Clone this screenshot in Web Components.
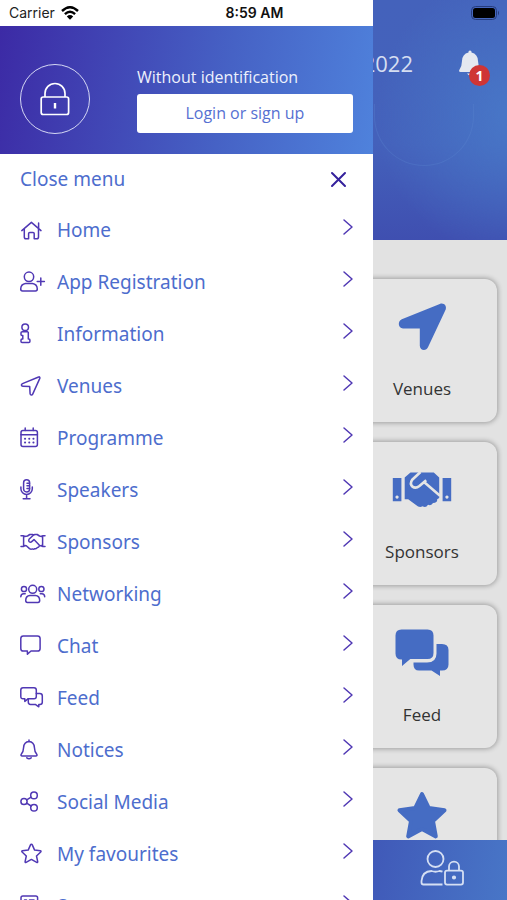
<!DOCTYPE html>
<html lang="en">
<head>
<meta charset="utf-8">
<meta name="viewport" content="width=device-width, initial-scale=1">
<title>Event menu</title>
<style>
  body {
    margin: 0;
    font-family: "Open Sans", "Noto Sans", sans-serif;
    background: #e3e3e3;
  }
</style>
</head>
<body>
<app-shell>
  <status-bar slot="status"></status-bar>

  <side-menu slot="menu">
    <menu-item icon="home">Home</menu-item>
    <menu-item icon="register">App Registration</menu-item>
    <menu-item icon="info">Information</menu-item>
    <menu-item icon="venues">Venues</menu-item>
    <menu-item icon="calendar">Programme</menu-item>
    <menu-item icon="mic">Speakers</menu-item>
    <menu-item icon="handshake">Sponsors</menu-item>
    <menu-item icon="people">Networking</menu-item>
    <menu-item icon="chat">Chat</menu-item>
    <menu-item icon="feed">Feed</menu-item>
    <menu-item icon="bell">Notices</menu-item>
    <menu-item icon="share">Social Media</menu-item>
    <menu-item icon="star">My favourites</menu-item>
    <menu-item icon="survey">Surveys</menu-item>
  </side-menu>

  <event-header count="1">2022</event-header>
  <tile-list>
    <tile-card icon="venues-solid">Venues</tile-card>
    <tile-card icon="handshake-solid">Sponsors</tile-card>
    <tile-card icon="feed-solid">Feed</tile-card>
    <tile-card icon="star-solid" label="My favourites"></tile-card>
  </tile-list>
  <bottom-bar></bottom-bar>
</app-shell>

<script>
// Outline icons sit in a 26x24 box, solid tile icons in a 60x48 box
const icons = {
  home: '<path d="M1.8 12.6 11.4 4.4l9.6 8.2M4.3 10.8V19q0 1.8 1.7 1.8h2.6v-5.2q0-1.2 1.2-1.2h3.2q1.2 0 1.2 1.2v5.2h2.6q1.7 0 1.7-1.8v-8.2M18.6 5v5"/>',
  register: '<circle cx="9" cy="6.8" r="4.7"/><path d="M5.6 13.6h6.8q4.7.6 4.9 5.4 0 1.9-1.8 1.9h-13q-1.8 0-1.8-1.9.2-4.8 4.9-5.4zM17.2 11.600h7.2M20.8 8v7.2"/>',
  info: '<circle cx="5.200" cy="5.200" r="3.300"/><path d="M2.300 9.800h5.300l.7.700v6.500h.7q.9 0 .9 1v1.600q0 1-1 1H2q-1 0-1-1V18q0-1 1-1h.8v-3.600H2q-1 0-1-1v-1.600q0-1 1.300-1z"/>',
  venues: '<path d="M18.6 3 2.500 9.600c-1.700.8-1.300 2.600.3 2.700l6.900.3.4 7.200c.1 1.500 1.900 1.800 2.600.3l7.100-15.700c.4-1-.3-1.800-1.200-1.400z"/>',
  calendar: '<rect x="1" y="4.600" width="16.400" height="16" rx="2"/><path d="M1 8.700h16.400M5.200 2v2.600M13.200 2v2.600"/><path stroke-width="2" d="M5 12.700h.1M9.200 12.700h.1M13.400 12.700h.1M5 16.600h.1M9.200 16.600h.1M13.400 16.600h.1"/>',
  mic: '<rect x="3.600" y="1.700" width="6" height="12.200" rx="3"/><path d="M.9 9v1.800a5.700 5.700 0 0 0 11.400 0V9M6.600 16.500v4M3.200 20.700h6.800M7 5.200h2.500M7 7.800h2.500M7 10.400h2.500"/>',
  handshake: '<path d="M1 5.800h2q1.300 0 1.600.8L7.500 6l2.300-1.500h2.600l1.200.6 1.200-.6h2.400L19.500 6l2 .6q.4-.8 1.500-.8h2M1 16.600h2.200q1.300-.1 1.600-1l1.500.2 3.200 2.800q1.400 1.100 2.800.3 1.300.8 2.600-.2 1.800.3 2.400-1.200 1.500 0 1.900-1.400l2.300-.5q.3 1 1.500 1h2M3.600 6v10.500M22.600 6v10.500M13.600 5 9 9.300q-.9 1.700.4 2.600 1.400.7 2.600-.5l2-1.800 5.400 5.600"/>',
  people: '<circle cx="12.700" cy="7.300" r="4"/><circle cx="4" cy="7" r="2.600"/><circle cx="21.400" cy="7" r="2.600"/><path d="M10 13.600h5.400q4.200.3 4.300 5 0 1.800-1.700 1.800H7.400q-1.700 0-1.700-1.800.1-4.700 4.300-5zM.8 14.700q.2-2.800 2.800-2.900h1.600M24.700 14.700q-.2-2.800-2.800-2.900h-1.600"/>',
  chat: '<path d="M3.300 2H17.500q2.600 0 2.600 2.600v9.800q0 2.600-2.600 2.600H11l-3.600 3.200V17H3.300Q.8 17 .8 14.400V4.600Q.8 2 3.300 2z"/>',
  feed: '<path d="M3 1.800h11q2.300 0 2.300 2.300v6.400q0 2.300-2.300 2.300H8l-3.200 2.600v-2.600H3Q.8 12.800.8 10.500V4.100q0-2.300 2.200-2.300z"/><path d="M16.300 7.600h3.500q2.500 0 2.500 2.300v6.300q0 2.200-2.300 2.200h-1.200v2.400l-3.500-2.400h-4.800q-2.200 0-2.200-2.400v-3.200"/>',
  bell: '<path d="M9 2v1.400M9 3.400q-5 .4-5.400 6-.1 4.400-2.500 7-.5 1.500 1 1.500h13.800q1.500 0 1-1.500-2.400-2.600-2.500-7-.4-5.600-5.400-6zM6.800 19.800q2.200 1.800 4.400 0"/>',
  share: '<circle cx="4" cy="11.500" r="3.100"/><circle cx="14" cy="5.400" r="3.300"/><circle cx="14" cy="17.800" r="3.300"/><path d="m6.700 9.900 4.400-2.700M6.700 13.200l4.400 2.800"/>',
  star: '<path d="M11.400 2.200q.6 0 .9.700l2.300 5.200 5.700.7q1.200.3.400 1.200l-4.200 4 1.200 5.600q.1 1.200-1 .7l-5.300-2.900-5.300 2.900q-1.100.5-1-.7l1.200-5.600-4.200-4q-.8-.9.400-1.200l5.700-.7 2.300-5.200q.3-.7.9-.7z"/>',
  survey: '<rect x="1" y="2" width="16.600" height="18" rx="1.800"/><path d="M4.500 6h2M9.500 6h4.500M4.500 10h2M9.500 10h4.500M4.500 14h2M9.500 14h4.500"/>',
  close: '<path stroke-width="2" d="m5 6 13 13M18 6 5 19"/>',
  chevron: '<path d="m17 5 8 7-8 7"/>',
  'venues-solid': '<path d="M47.800.9 9.800 16.300c-4.600 2-3.600 8.900 1.200 9.200h16.800v17.300c.2 5 6.500 5.700 8.300 1.200L53.700 6.500C55 2.700 51.800-.6 47.800.9z"/>',
  'handshake-solid': '<path fill-rule="evenodd" d="M.8 12h8.600v23.300H.8zM5 29.500a1.600 1.600 0 1 0 .1 0zM50.600 12h8.600v23.300h-8.600zM54.900 29.500a1.600 1.600 0 1 0 .1 0z"/><path d="m12.700 11.500 5.800-5h23.300l5.400 5v20.500l-2 1.200q.3 3.800-4.200 3.800-1.500 3-5 1.800-2 3.500-5.500 1.500-3 2-6.500-1.200L16.200 33.200h-3.500z"/><path class="cut" d="m28.500 6-8.300 7.800q-2.700 4 .2 6.800 3.300 2.400 7-.6l6.800-5.800M32 16l16 13.700"/>',
  'feed-solid': '<path d="M9.500.5h26q6 0 6 6v17.500q0 6-6 6H18.300L10 37v-6.500h-.5q-6 0-6-6v-18q0-6 6-6z"/><path d="M44.500 15H50q6.500 0 6.500 6v14.500q0 6-6.500 6h-2V47l-8.500-5.500H27q-5.500 0-5.500-6v-2H35q9.500 0 9.500-9z"/>',
  'star-solid': '<path stroke-linejoin="round" stroke-width="4" stroke="currentColor" d="m30 2 6.800 14 15.700 2.200L41 29l2.800 15.400L30 37.100l-13.800 7.300L19 29 7.500 18.200 23.200 16z"/>',
};

class AppIcon extends HTMLElement {
  connectedCallback() {
    if (this.shadowRoot) return;

    const name = this.getAttribute('name');
    const solid = name.endsWith('-solid');
    this.attachShadow({ mode: 'open' });
    this.shadowRoot.innerHTML = /* html */`
      <style>
      :host { display: block; flex: none; }
      svg { display: block; overflow: visible; }
      .outline {
        fill: none;
        stroke: currentColor;
        stroke-width: 1.5;
        stroke-linecap: round;
        stroke-linejoin: round;
      }
      .solid { fill: currentColor; }
      .cut { fill: none; stroke: #e5e5e5; stroke-width: 2.6; stroke-linejoin: round; }
      </style>
      <svg class="${solid ? 'solid' : 'outline'}" aria-hidden="true"
        width="${solid ? 60 : 26}" height="${solid ? 48 : 24}"
        viewBox="0 0 ${solid ? '60 48' : '26 24'}">${icons[name]}</svg>
    `;
  }
}

const shellTemplate = document.createElement('template');
shellTemplate.innerHTML = /* html */`
  <style>
  :host {
    display: grid;
    grid-template-columns: minmax(0, 25fr) minmax(0, 9fr);
    height: 100vh;
    overflow: hidden;
    position: relative;
  }
  .page {
    display: flex;
    flex-direction: column;
    min-height: 0;
    overflow: hidden;
  }
  slot[name="status"]::slotted(*) {
    position: absolute;
    inset: 0 0 auto;
    z-index: 1;
  }
  </style>
  <slot name="status"></slot>
  <slot name="menu"></slot>
  <main class="page"><slot></slot></main>
`;

class AppShell extends HTMLElement {
  constructor() {
    super();

    this.attachShadow({ mode: 'open' });
    this.shadowRoot.appendChild(shellTemplate.content.cloneNode(true));
  }
}

const statusTemplate = document.createElement('template');
statusTemplate.innerHTML = /* html */`
  <style>
  :host {
    display: grid;
    grid-template-columns: 1fr auto 1fr;
    align-items: center;
    height: 26px;
    padding: 0 7px 0 9px;
    box-sizing: border-box;
    font: 14px/26px Inter, "Liberation Sans", sans-serif;
    color: #222;
  }
  .carrier { display: flex; align-items: center; gap: 6px; }
  .time { font-weight: 600; color: #111; }
  .battery { justify-self: end; }
  svg { display: block; }
  </style>
  <div class="carrier">
    <span>Carrier</span>
    <svg width="18" height="14" viewBox="0 0 18 14" fill="none" stroke="#000" stroke-width="2.4">
      <path d="M1 5q8-7.500 16 0M3.900 8.200q5.100-4.800 10.200 0"/>
      <path fill="#000" stroke="none" d="M5.800 10.400q3.200-2.600 6.400 0L9 13.800z"/>
    </svg>
  </div>
  <time class="time">8:59 AM</time>
  <svg class="battery" width="29" height="14" viewBox="0 0 29 14">
    <rect x=".5" y=".5" width="25" height="13" rx="4" fill="none" stroke="#263c7d"/>
    <rect x="2" y="2" width="22" height="10" rx="2.5"/>
    <path d="M27 4.500q2 2.500 0 5z" fill="#263c7d"/>
  </svg>
`;

class StatusBar extends HTMLElement {
  constructor() {
    super();

    this.attachShadow({ mode: 'open' });
    this.shadowRoot.appendChild(statusTemplate.content.cloneNode(true));
  }
}

const menuTemplate = document.createElement('template');
menuTemplate.innerHTML = /* html */`
  <style>
  :host {
    display: block;
    padding-top: 26px;
    min-height: 0;
    overflow: hidden;
    background: #fff;
    color: #4d6dcd;
  }
  header {
    display: flex;
    align-items: center;
    gap: 47px;
    height: 128px;
    padding: 18px 20px 0;
    box-sizing: border-box;
    background: linear-gradient(100deg, #3c2aa5, #4662c5 60%, #4f82dc);
    color: #eef1fc;
  }
  .avatar {
    flex: none;
    display: grid;
    place-items: center;
    width: 70px;
    height: 70px;
    box-sizing: border-box;
    border: 1px solid #d5d8f4;
    border-radius: 50%;
  }
  .account {
    flex: 1;
    display: grid;
    gap: 6px;
    font-size: 16px;
    line-height: 22px;
  }
  .login {
    height: 39px;
    border: 0;
    border-radius: 3px;
    background: #fff;
    color: #5670d2;
    font: inherit;
  }
  .close {
    display: flex;
    align-items: center;
    justify-content: space-between;
    width: 100%;
    height: 50px;
    padding: 0 20px;
    border: 0;
    background: none;
    color: inherit;
    font: 19px "Noto Sans", "Open Sans", sans-serif;
    text-align: left;
  }
  .close app-icon { color: #34219c; }
  </style>
  <header>
    <div class="avatar">
      <svg width="30" height="34" viewBox="0 0 30 34" fill="none" stroke="#fff" stroke-width="1.7">
        <rect x="1.2" y="15" width="27.4" height="17.500" rx="2"/>
        <path d="M5 15v-3.500a10 10 0 0 1 20 0V15"/>
        <path stroke-width="2.4" d="M15 21v5.500"/>
      </svg>
    </div>
    <div class="account">
      <span>Without identification</span>
      <button class="login" type="button">Login or sign up</button>
    </div>
  </header>
  <button class="close" type="button">Close menu <app-icon name="close"></app-icon></button>
  <nav><slot></slot></nav>
`;

class SideMenu extends HTMLElement {
  constructor() {
    super();

    this.attachShadow({ mode: 'open' });
    this.shadowRoot.appendChild(menuTemplate.content.cloneNode(true));
  }
}

class MenuItem extends HTMLElement {
  connectedCallback() {
    if (this.shadowRoot) return;

    this.attachShadow({ mode: 'open' });
    this.shadowRoot.innerHTML = /* html */`
      <style>
      :host { display: block; }
      a {
        display: flex;
        align-items: center;
        gap: 11px;
        height: 52px;
        padding: 0 20px;
        color: inherit;
        font: 19px "Noto Sans", "Open Sans", sans-serif;
        text-decoration: none;
      }
      .label { flex: 1; }
      app-icon { color: #5038b4; }
      .chevron { padding-bottom: 6px; }
      </style>
      <a href="#${this.getAttribute('icon')}">
        <app-icon name="${this.getAttribute('icon')}"></app-icon>
        <span class="label"><slot></slot></span>
        <app-icon class="chevron" name="chevron"></app-icon>
      </a>
    `;
  }
}

class EventHeader extends HTMLElement {
  connectedCallback() {
    if (this.shadowRoot) return;

    this.attachShadow({ mode: 'open' });
    this.shadowRoot.innerHTML = /* html */`
      <style>
      :host {
        display: block;
        flex: none;
        height: 240px;
        box-sizing: border-box;
        padding: 43px 17px 0 0;
        position: relative;
        overflow: hidden;
        background:
          radial-gradient(circle at 110% 48%, #4878c8, transparent 75%),
          linear-gradient(#4462bb, #4461bb 60%, #3f4fb0);
      }
      :host::after {
        content: "";
        position: absolute;
        top: 104px;
        right: 33px;
        width: 100px;
        height: 62px;
        box-sizing: border-box;
        border: 1px solid #5b83ce55;
        border-top: 0;
        border-radius: 0 0 50px 50px;
      }
      .bar {
        display: flex;
        align-items: center;
        justify-content: flex-end;
        gap: 46px;
        height: 40px;
        color: #d5def1;
        font-size: 22px;
      }
      button {
        position: relative;
        padding: 0 9px 0 0;
        border: 0;
        background: none;
        color: #e5e8f0;
      }
      svg { display: block; }
      .badge {
        position: absolute;
        right: 0;
        top: 15px;
        width: 21px;
        height: 21px;
        border-radius: 50%;
        background: #cf3535;
        color: #fff;
        font: 700 14px/21px "Open Sans", sans-serif;
        text-align: center;
      }
      </style>
      <div class="bar">
        <span><slot></slot></span>
        <button type="button" aria-label="Notices">
          <svg width="22" height="26" viewBox="0 0 22 26" fill="currentColor">
            <path d="M9.500 2.500V1.400q1.500-1.800 3 0v1.100q6.300 1.500 6.500 8.500 0 5 2.700 9 .8 2-1.200 2h-19q-2 0-1.200-2Q3 16 3 11q.2-7 6.500-8.500zM8 23.500h6q-3 4-6 0z"/>
          </svg>
          <span class="badge">${this.getAttribute('count')}</span>
        </button>
      </div>
    `;
  }
}

class TileList extends HTMLElement {
  constructor() {
    super();

    this.attachShadow({ mode: 'open' });
    this.shadowRoot.innerHTML = /* html */`
      <style>
      :host {
        flex: 1;
        display: flex;
        flex-direction: column;
        align-items: flex-end;
        gap: 20px;
        min-height: 0;
        padding: 39px 10px 0 0;
        overflow: hidden;
        background: #e2e2e2;
      }
      </style>
      <slot></slot>
    `;
  }
}

class TileCard extends HTMLElement {
  connectedCallback() {
    if (this.shadowRoot) return;

    this.attachShadow({ mode: 'open' });
    this.shadowRoot.innerHTML = /* html */`
      <style>
      :host { display: block; flex: none; }
      a {
        display: flex;
        flex-direction: column;
        align-items: center;
        gap: 26px;
        width: 150px;
        height: 143px;
        box-sizing: border-box;
        padding-top: 24px;
        border-radius: 12px;
        background: #e5e5e5;
        box-shadow: 0 0 5px 1px #0000004d;
        color: #333;
        font-size: 17px;
        line-height: 24px;
        text-decoration: none;
      }
      app-icon { color: #456cc3; }
      </style>
      <a href="#${this.getAttribute('icon')}" ${this.hasAttribute('label') ? `aria-label="${this.getAttribute('label')}"` : ''}>
        <app-icon name="${this.getAttribute('icon')}"></app-icon>
        <slot></slot>
      </a>
    `;
  }
}

class BottomBar extends HTMLElement {
  constructor() {
    super();

    this.attachShadow({ mode: 'open' });
    this.shadowRoot.innerHTML = /* html */`
      <style>
      :host {
        display: flex;
        flex: none;
        justify-content: flex-end;
        height: 60px;
        padding-right: 43px;
        background: linear-gradient(100deg, #4059b8, #4876c7);
        color: #d5dff3;
      }
      button {
        align-self: flex-start;
        padding: 10px 0;
        border: 0;
        background: none;
        color: inherit;
      }
      svg { display: block; }
      </style>
      <button type="button" aria-label="Account">
        <svg width="44" height="36" viewBox="0 0 44 36" fill="none" stroke="currentColor" stroke-width="1.8">
          <circle cx="15.5" cy="9" r="8"/>
          <path d="M22.500 21.600q-1.500-.6-3-.6-4 1.500-8 0-9.300.3-10 10v1.500q0 2 2 2h19"/>
          <rect x="25" y="20.600" width="18" height="14" rx="2"/>
          <path d="M29 20.600v-4a5 5 0 0 1 10 0v4"/>
          <circle cx="34" cy="27.500" r="1.200" fill="currentColor"/>
        </svg>
      </button>
    `;
  }
}

customElements.define('app-icon', AppIcon);
customElements.define('app-shell', AppShell);
customElements.define('status-bar', StatusBar);
customElements.define('side-menu', SideMenu);
customElements.define('menu-item', MenuItem);
customElements.define('event-header', EventHeader);
customElements.define('tile-list', TileList);
customElements.define('tile-card', TileCard);
customElements.define('bottom-bar', BottomBar);
</script>
</body>
</html>
